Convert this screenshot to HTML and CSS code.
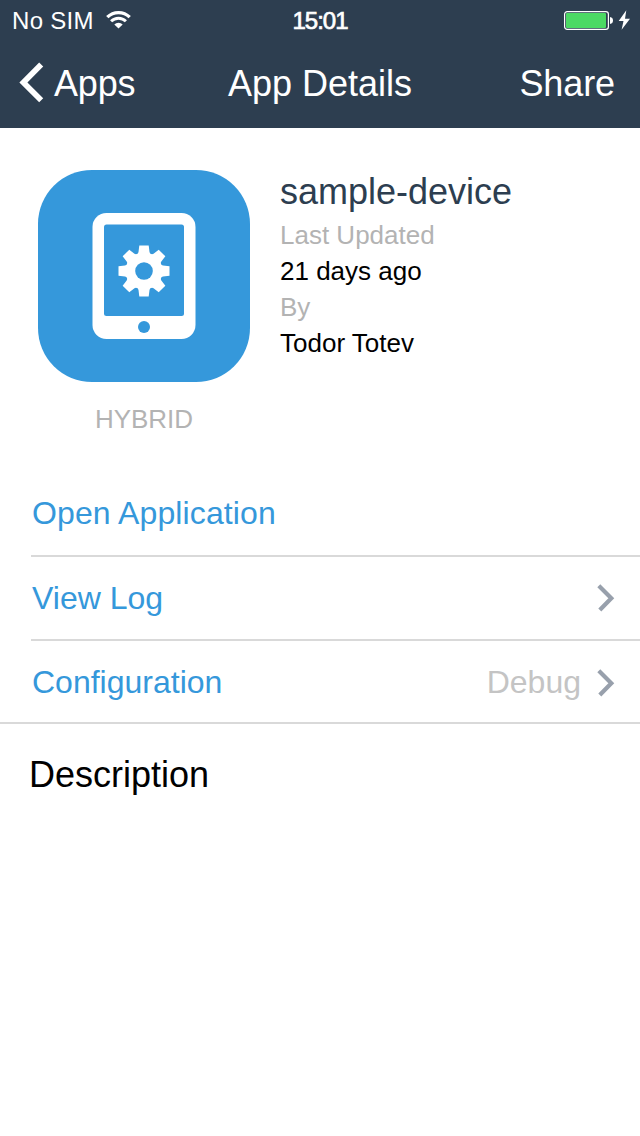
FILE: index.html
```html
<!DOCTYPE html>
<html lang="en">
<head>
<meta charset="utf-8">
<title>App Details</title>
<link rel="stylesheet" href="styles.css">
</head>
<body>
<header class="header">
  <div class="status">
    <div class="carrier">
      <span class="carrier-name">No SIM</span>
      <svg class="wifi" width="25" height="19" viewBox="0 0 25 19" fill="none" stroke="#fff">
        <path d="M1.300 7.200a15.800 15.800 0 0 1 22.400 0" stroke-width="3.300"/>
        <path d="M5.100 11.300a10.400 10.400 0 0 1 14.800 0" stroke-width="2.900"/>
        <path d="M8.300 14.400a6 6 0 0 1 8.400 0l-4.200 4.200z" fill="#fff" stroke="none"/>
      </svg>
    </div>
    <span class="time">15:01</span>
    <svg class="battery" width="68" height="22" viewBox="0 0 68 22">
      <rect x=".6" y="1.600" width="43.800" height="17.800" rx="2.600" fill="none" stroke="#fff" stroke-width="1.200"/>
      <rect x="2" y="3" width="40" height="15" rx="1" fill="#4cd964"/>
      <path d="M46 7c2 .3 3 1.500 3 3.500s-1 3.200-3 3.500z" fill="#fff"/>
      <path d="M62.300.300 54.700 11h4.800l-1.900 8.800L66 8.800h-5z" fill="#fff"/>
    </svg>
  </div>
  <nav class="nav">
    <a class="back">
      <svg width="25" height="42" viewBox="0 0 25 42" fill="none" stroke="#fff" stroke-width="5.700"><path d="M22.200 2.400 4.400 20.400l17.800 17.800"/></svg>
      <span>Apps</span>
    </a>
    <h1 class="title">App Details</h1>
    <a class="share">Share</a>
  </nav>
</header>
<main>
  <section class="app">
    <div class="app-kind">
      <svg class="app-icon" width="212" height="212" viewBox="0 0 212 212">
        <rect width="212" height="212" rx="54" fill="#3598db"/>
        <rect x="54.500" y="43" width="103" height="126" rx="14" fill="#fff"/>
        <rect x="66" y="54.500" width="80" height="91.500" rx="2.500" fill="#3598db"/>
        <circle cx="106" cy="157" r="6" fill="#3598db"/>
        <g transform="translate(106 101)" fill="#fff">
          <circle r="18.500"/>
          <path id="tooth" d="M-7.500-16Q-6-17-5.500-19l.8-6.500h9.400l.8 6.500Q6-17 7.500-16z"/>
          <use href="#tooth" transform="rotate(45)"/>
          <use href="#tooth" transform="rotate(90)"/>
          <use href="#tooth" transform="rotate(135)"/>
          <use href="#tooth" transform="rotate(180)"/>
          <use href="#tooth" transform="rotate(225)"/>
          <use href="#tooth" transform="rotate(270)"/>
          <use href="#tooth" transform="rotate(315)"/>
          <circle r="8.800" fill="#3598db"/>
        </g>
      </svg>
      <span class="kind">HYBRID</span>
    </div>
    <div class="app-info">
      <h2 class="app-name">sample-device</h2>
      <span class="label">Last Updated</span>
      <span>21 days ago</span>
      <span class="label">By</span>
      <span>Todor Totev</span>
    </div>
  </section>
  <div class="actions">
    <a class="row row-open">Open Application</a>
    <a class="row row-log"><span>View Log</span>
      <svg class="chevron" width="18" height="28" viewBox="0 0 18 28"><path d="M1.800 1.800 14.300 14.300 2.800 26"/></svg></a>
    <a class="row row-config"><span>Configuration</span><span class="value">Debug</span>
      <svg class="chevron" width="18" height="28" viewBox="0 0 18 28"><path d="M1.800 1.800 14.300 14.300 2.800 26"/></svg></a>
  </div>
  <h2 class="description">Description</h2>
</main>
</body>
</html>
```
FILE: styles.css
```css
* { box-sizing: border-box; }
body {
  margin: 0;
  width: 640px;
  min-height: 1136px;
  background: #fff;
  color: #000;
  font-family: "Liberation Sans", Arial, sans-serif;
}
h1, h2 { margin: 0; font-weight: 400; font-size: 36px; }
.header { height: 128px; background: #2d3e50; color: #fff; }
.status {
  display: grid;
  grid-template-columns: 1fr auto 1fr;
  height: 40px;
  padding: 0 8px 0 12px;
  font-size: 24px;
  line-height: 41px;
}
.carrier { display: flex; align-items: flex-start; gap: 12px; }
.carrier-name { letter-spacing: 0.3px; }
.wifi { margin-top: 10px; }
.time { margin-left: -4px; letter-spacing: -1px; -webkit-text-stroke: 0.7px #fff; }
.battery { justify-self: end; margin-top: 10px; }
.nav {
  display: grid;
  grid-template-columns: 1fr auto 1fr;
  height: 88px;
  padding: 0 25px 0 19px;
  font-size: 36px;
  line-height: 88px;
}
.back { display: flex; gap: 10px; letter-spacing: -0.2px; }
.back svg { margin-top: 22px; }
.title { margin-left: 6px; line-height: 88px; }
.share { justify-self: end; letter-spacing: -0.1px; }
.app { display: flex; gap: 30px; height: 343px; padding: 42px 0 0 38px; }
.app-kind { display: flex; flex-direction: column; align-items: center; width: 212px; }
.kind { margin-top: 22px; font-size: 26px; line-height: 30px; color: #b3b3b3; }
.app-info { display: flex; flex-direction: column; font-size: 26px; line-height: 36px; }
.app-name { height: 47px; line-height: 44px; color: #2d3e50; }
.label { color: #b3b3b3; }
.actions { border-bottom: 2px solid #d9d9d9; }
.row {
  display: flex;
  align-items: center;
  margin-left: 31px;
  padding: 0 25px 0 1px;
  font-size: 32px;
  color: #3598db;
}
.row-open { height: 86px; border-bottom: 2px solid #d9d9d9; letter-spacing: 0.12px; }
.row-log { height: 84px; border-bottom: 2px solid #d9d9d9; }
.row-config { height: 81px; padding-top: 2px; }
.chevron { margin-left: auto; fill: none; stroke: #98a0ac; stroke-width: 4.2; }
.value { margin-left: auto; color: #c4c4c4; }
.value + .chevron { margin-left: 16px; }
.description { padding: 31px 29px 0; line-height: 40px; }
```
